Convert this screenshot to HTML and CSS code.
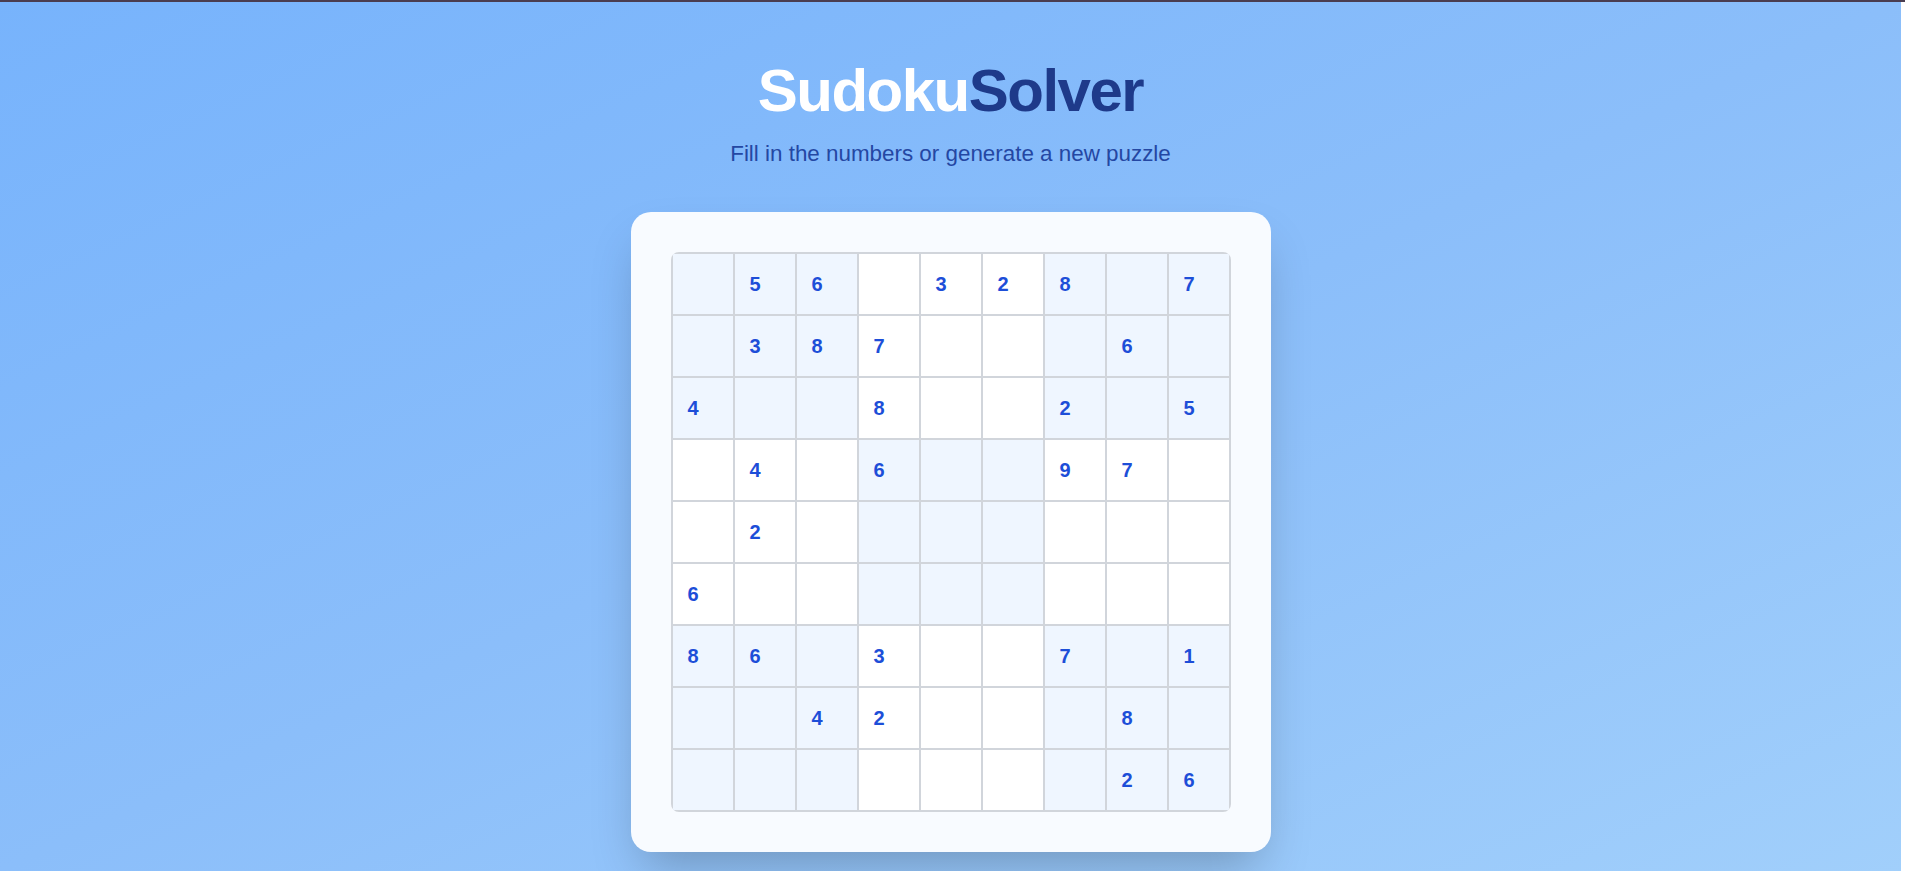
FILE: index.html
```html
<!DOCTYPE html>
<html lang="en">
<head>
<meta charset="utf-8">
<title>Sudoku Solver</title>
<link rel="stylesheet" href="styles.css">
</head>
<body>
<main class="page">
  <h1 class="title"><span class="title-light">Sudoku</span><span class="title-dark">Solver</span></h1>
  <p class="subtitle">Fill in the numbers or generate a new puzzle</p>
  <section class="card">
    <div class="grid" id="grid">
      <div class="cell shade"></div><div class="cell shade">5</div><div class="cell shade">6</div><div class="cell"></div><div class="cell">3</div><div class="cell">2</div><div class="cell shade">8</div><div class="cell shade"></div><div class="cell shade">7</div>
      <div class="cell shade"></div><div class="cell shade">3</div><div class="cell shade">8</div><div class="cell">7</div><div class="cell"></div><div class="cell"></div><div class="cell shade"></div><div class="cell shade">6</div><div class="cell shade"></div>
      <div class="cell shade">4</div><div class="cell shade"></div><div class="cell shade"></div><div class="cell">8</div><div class="cell"></div><div class="cell"></div><div class="cell shade">2</div><div class="cell shade"></div><div class="cell shade">5</div>
      <div class="cell"></div><div class="cell">4</div><div class="cell"></div><div class="cell shade">6</div><div class="cell shade"></div><div class="cell shade"></div><div class="cell">9</div><div class="cell">7</div><div class="cell"></div>
      <div class="cell"></div><div class="cell">2</div><div class="cell"></div><div class="cell shade"></div><div class="cell shade"></div><div class="cell shade"></div><div class="cell"></div><div class="cell"></div><div class="cell"></div>
      <div class="cell">6</div><div class="cell"></div><div class="cell"></div><div class="cell shade"></div><div class="cell shade"></div><div class="cell shade"></div><div class="cell"></div><div class="cell"></div><div class="cell"></div>
      <div class="cell shade">8</div><div class="cell shade">6</div><div class="cell shade"></div><div class="cell">3</div><div class="cell"></div><div class="cell"></div><div class="cell shade">7</div><div class="cell shade"></div><div class="cell shade">1</div>
      <div class="cell shade"></div><div class="cell shade"></div><div class="cell shade">4</div><div class="cell">2</div><div class="cell"></div><div class="cell"></div><div class="cell shade"></div><div class="cell shade">8</div><div class="cell shade"></div>
      <div class="cell shade"></div><div class="cell shade"></div><div class="cell shade"></div><div class="cell"></div><div class="cell"></div><div class="cell"></div><div class="cell shade"></div><div class="cell shade">2</div><div class="cell shade">6</div>
    </div>
  </section>
</main>
<div class="edge"></div>
</body>
</html>
```

FILE: styles.css
```css
html, body {
  margin: 0;
  padding: 0;
  height: 100%;
}

body {
  border-top: 2px solid #4a3d50;
  box-sizing: border-box;
  overflow: hidden;
  font-family: "Liberation Sans", Arial, sans-serif;
  background: linear-gradient(to bottom right, #77b3fc 0%, #8bbefa 50%, #a1cffb 100%);
}

.page {
  display: flex;
  flex-direction: column;
  align-items: center;
  padding: 59px 4px 0 0;
}

.title {
  margin: 0;
  font-size: 60px;
  line-height: 60px;
  font-weight: 700;
  letter-spacing: -1.5px;
}

.title-light {
  color: #ffffff;
}

.title-dark {
  color: #1e3a8a;
}

.subtitle {
  margin: 19px 0 0;
  font-size: 22.4px;
  line-height: 28px;
  color: #2447a3;
}

.card {
  margin-top: 44px;
  padding: 40px;
  background: #f8fbff;
  border-radius: 20px;
  box-shadow: 0 25px 50px -12px rgba(0, 0, 0, 0.25);
}

.grid {
  display: grid;
  grid-template-columns: repeat(9, 60px);
  grid-auto-rows: 60px;
  gap: 2px;
  padding: 2px;
  background: #d1d5db;
  border-radius: 8px;
  overflow: hidden;
}

.cell {
  background: #ffffff;
  padding-left: 15px;
  font-size: 20px;
  line-height: 60px;
  font-weight: 700;
  color: #1d4ed8;
}

.cell.shade {
  background: #eff6ff;
}

.edge {
  position: fixed;
  top: 2px;
  right: 0;
  width: 4px;
  bottom: 0;
  background: #ffffff;
}
```
